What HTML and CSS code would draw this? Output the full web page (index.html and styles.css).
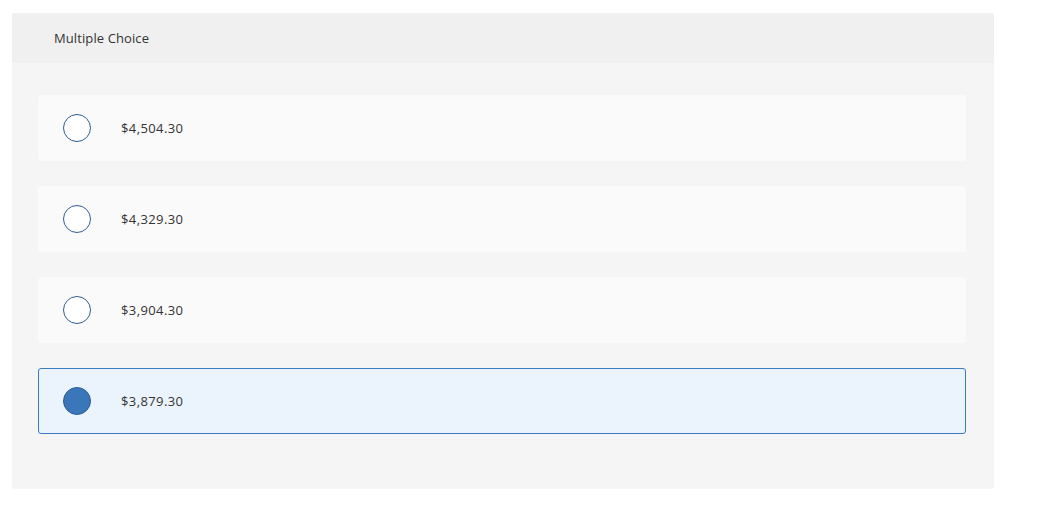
FILE: index.html
```html
<!DOCTYPE html>
<html>
<head>
<meta charset="utf-8">
<link rel="stylesheet" href="styles.css">
</head>
<body>
<div class="card">
  <div class="card-header">Multiple Choice</div>
  <div class="card-body">
    <div class="option"><span class="radio"></span><span class="label">$4,504.30</span></div>
    <div class="option"><span class="radio"></span><span class="label">$4,329.30</span></div>
    <div class="option"><span class="radio"></span><span class="label">$3,904.30</span></div>
    <div class="option selected"><span class="radio"></span><span class="label">$3,879.30</span></div>
  </div>
</div>
</body>
</html>
```

FILE: styles.css
```css
html, body {
  margin: 0;
  padding: 0;
  background: #ffffff;
}
body {
  padding: 13px 0 0 12px;
  font-family: "Open Sans", "Liberation Sans", sans-serif;
  color: #333333;
}
.card {
  width: 982px;
  height: 476px;
  background: #f5f5f5;
  border-radius: 3px;
  overflow: hidden;
  display: flex;
  flex-direction: column;
}
.card-header {
  height: 50px;
  background: #f0f0f0;
  display: flex;
  align-items: center;
  padding-left: 42px;
  font-size: 13px;
  letter-spacing: 0.1px;
}
.card-body {
  padding: 32px 28px 0 26px;
  display: flex;
  flex-direction: column;
  gap: 25px;
}
.option {
  height: 66px;
  box-sizing: border-box;
  background: #fafafa;
  border: 1px solid #fafafa;
  border-radius: 3px;
  display: flex;
  align-items: center;
  padding-left: 24px;
}
.option.selected {
  background: #ebf3fc;
  border-color: #3b7bc1;
}
.radio {
  width: 28px;
  height: 28px;
  box-sizing: border-box;
  border: 1.5px solid #2f5f90;
  border-radius: 50%;
  background: #ffffff;
  flex: none;
}
.selected .radio {
  background: #3a76ba;
  border-color: #2f5f90;
}
.label {
  margin-left: 30px;
  font-size: 13px;
  letter-spacing: 0.4px;
}
```
